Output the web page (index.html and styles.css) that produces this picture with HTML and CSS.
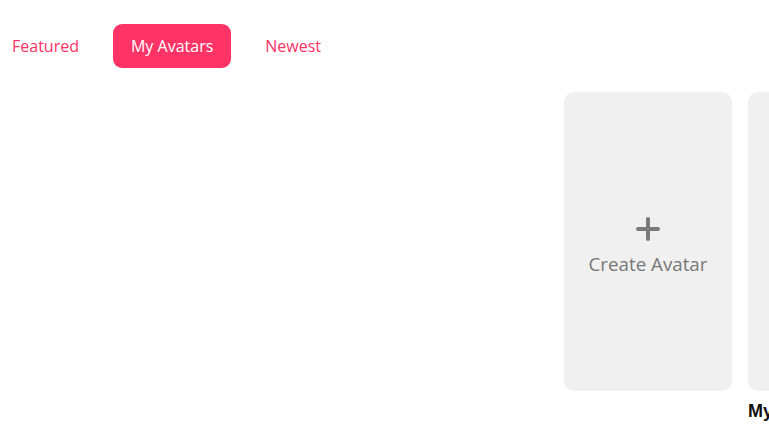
FILE: index.html
```html
<!DOCTYPE html>
<html lang="en">
<head>
<meta charset="utf-8">
<title>Avatars</title>
<link rel="stylesheet" href="styles.css">
</head>
<body>
<nav class="tabs">
  <a class="tab">Featured</a>
  <a class="tab active">My Avatars</a>
  <a class="tab">Newest</a>
</nav>
<section class="cards">
  <div class="item">
    <div class="card create">
      <svg class="plus" width="24" height="24" viewBox="0 0 24 24">
        <path d="M12 2v20M2 12h20" stroke="#7a7a7a" stroke-width="4" stroke-linecap="round" fill="none"/>
      </svg>
      <span class="create-label">Create Avatar</span>
    </div>
  </div>
  <div class="item">
    <div class="card"></div>
    <div class="name">My Avatar</div>
  </div>
</section>
</body>
</html>
```
FILE: styles.css
```css
html, body {
  margin: 0;
  padding: 0;
  background: #ffffff;
  overflow: hidden;
  width: 769px;
  height: 425px;
}
body {
  font-family: "Open Sans", "Noto Sans", sans-serif;
}
.tabs {
  display: flex;
  gap: 16px;
  margin: 24px 0 0 -6px;
}
.tab {
  display: flex;
  align-items: center;
  height: 44px;
  padding: 0 18px;
  border-radius: 9px;
  font-size: 16px;
  color: #ff3366;
  cursor: pointer;
}
.tab.active {
  background: #ff3366;
  color: #ffffff;
}
.cards {
  display: flex;
  gap: 16px;
  margin-top: 24px;
  padding-left: 564px;
}
.item {
  flex: 0 0 168px;
  display: flex;
  flex-direction: column;
}
.card {
  height: 299px;
  border-radius: 10px;
  background: #f0f0f0;
}
.create {
  display: flex;
  flex-direction: column;
  align-items: center;
  justify-content: center;
  gap: 10px;
}
.plus {
  display: block;
  margin-top: 10px;
}
.create-label {
  font-size: 18.75px;
  color: #777777;
}
.name {
  margin-top: 10px;
  font-family: "Liberation Sans", Arial, sans-serif;
  font-weight: bold;
  font-size: 18px;
  color: #111111;
  white-space: nowrap;
}
```
